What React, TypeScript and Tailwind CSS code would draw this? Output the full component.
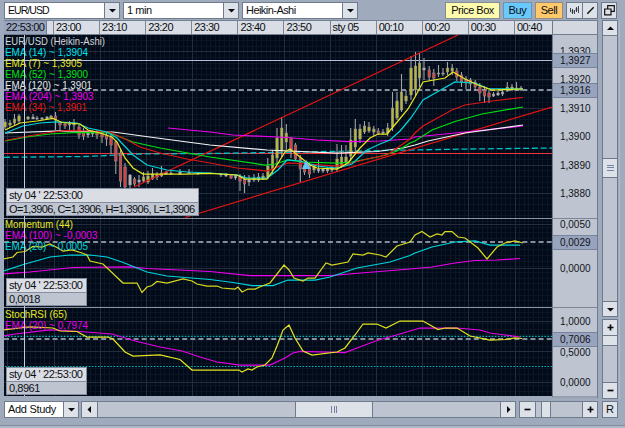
import type { ReactNode } from 'react';

type Candle = [number, number, number, number, number, string];

const Y = '#b9b63c';
const R = '#d24444';
const G = '#b4b6b8';

// x, high, low, body top, body bottom, colour
const candles: Candle[] = [
  [5, 119, 129, 122, 127, Y], [10, 120, 128, 123, 125, Y], [14.5, 114, 125, 119, 123, Y],
  [19, 114, 123, 116, 121, Y], [28, 116, 120, 117, 119, Y], [33, 114, 119, 117, 119, G],
  [37, 116, 120, 118, 119, G], [42, 117, 120, 118, 119, G], [47, 116, 119, 117, 119, G],
  [51, 115, 119, 116, 118, Y], [55.5, 112, 130, 116, 120, R], [60, 122, 131, 123, 125, R],
  [65, 123, 129, 124, 126, R], [69.5, 121, 130, 124, 125, G], [74, 119, 130, 123, 125, Y],
  [79, 124, 139, 127, 135, R], [83.5, 128, 140, 131, 136, R], [88, 130, 138, 132, 135, G],
  [92.5, 130, 137, 132, 134, G], [97, 130, 139, 132, 135, R], [102, 131, 143, 133, 137, R],
  [106.5, 132, 146, 135, 139, R], [111, 134, 154, 137, 145, R], [115.8, 140, 174, 142, 161, R],
  [120.5, 149, 187, 153, 181, R], [125, 163, 188, 167, 187, R], [130, 174, 188, 175, 185, G],
  [134.5, 177, 186, 179, 184, R], [139, 175, 187, 180, 182, G], [143.5, 172, 183, 177, 181, Y],
  [148, 171, 184, 176, 182, Y], [152.5, 168, 180, 174, 179, Y], [157, 172, 180, 175, 177, G],
  [161.5, 166, 177, 173, 176, Y], [166, 171, 175, 172, 174, G], [171, 170, 175, 173, 174, Y],
  [180, 169, 175, 172, 174, G], [189, 169, 174, 172, 173, G], [198, 172, 175, 173, 174, G],
  [221, 173, 177, 174, 175, G], [226, 173, 177, 174, 176, G], [231, 174, 179, 175, 178, R],
  [235.5, 174, 180, 175, 178, G], [240, 174, 191, 176, 181, R], [244.5, 175, 193, 179, 184, R],
  [249, 175, 186, 180, 182, G], [254, 174, 182, 178, 180, Y], [258.5, 173, 182, 177, 180, G],
  [263, 173, 180, 176, 179, Y], [267.8, 158, 179, 166, 177, Y], [272.5, 150, 174, 155, 170, Y],
  [277, 128, 165, 138, 158, Y], [281.7, 117, 157, 128, 151, Y], [286.3, 124, 150, 133, 142, Y],
  [291, 137, 158, 138, 150, R], [295.5, 143, 161, 145, 159, R], [300.3, 155, 182, 158, 169, R],
  [304.5, 162, 175, 166, 172, R], [309.5, 163, 178, 165, 174, R], [314, 164, 173, 166, 170, Y],
  [318.5, 160, 173, 169, 171, G], [323, 168, 173, 169, 171, G], [327.5, 167, 173, 169, 171, G],
  [332, 166, 172, 168, 170, G], [337, 144, 172, 159, 169, Y], [341.5, 145, 168, 157, 166, Y],
  [346, 145, 164, 157, 162, Y], [350.7, 128, 161, 140, 156, Y], [355.3, 119, 152, 129, 147, Y],
  [360, 124, 143, 129, 139, Y], [364.5, 121, 134, 126, 132, Y], [369, 122, 133, 127, 131, Y],
  [373.8, 126, 136, 129, 132, Y], [378.3, 128, 135, 131, 133, R], [383, 129, 135, 132, 133, G],
  [387.7, 123, 136, 128, 133, Y], [392.5, 92, 131, 108, 127, Y], [397, 92, 120, 101, 118, Y],
  [401.5, 74, 112, 92, 110, Y], [406, 90, 104, 96, 101, Y], [411, 56, 100, 68, 95, Y],
  [415.5, 52, 96, 66, 90, Y], [419.5, 53, 87, 63, 78, Y], [424, 58, 80, 68, 70, G],
  [429.2, 66, 81, 70, 77, R], [433.8, 69, 86, 73, 78, R], [438.5, 65, 77, 73, 74, G],
  [443, 68, 76, 73, 74, G], [447.5, 62, 75, 68, 72, Y], [452.2, 64, 75, 68, 71, Y],
  [456.8, 68, 81, 71, 77, R], [461.5, 72, 87, 75, 82, R], [466, 76, 89, 79, 83, R],
  [470.5, 78, 91, 80, 84, R], [475.2, 80, 91, 82, 87, R], [479.8, 83, 101, 87, 93, R],
  [484.5, 86, 103, 90, 96, R], [489, 90, 103, 93, 97, R], [493.5, 92, 97, 94, 96, G],
  [498, 91, 96, 93, 95, G], [502.5, 90, 96, 92, 94, G], [507.3, 82, 92, 87, 91, Y],
  [512, 84, 91, 87, 90, Y], [516.5, 82, 91, 88, 90, Y], [521, 86, 91, 88, 90, Y],
];

const studies: [string, string][] = [
  ['#f000f0', '168,128 210,132 233,135 287,137.5 317,140 350,141.5 380,141 410,139 415,137 475,131 523,126'],
  ['#f4f4f4', '5,133 60,131 113,132 157,138 210,145 267,150 337,153 377,151.5 403,148 415,145 428,141 465,133 523,125'],
  ['#00e010', '5,141 30,136.5 50,134 77,132.5 110,133 133,142 160,148 210,157 265,165 275,164 288,160 303,162 337,163 352,162 380,156.5 397,151 410,143 415,141 432,130 455,121.5 482,114 523,107'],
  ['#e01515', '5,140.5 28,136 50,132.5 67,130.5 90,131 110,132 127,140 140,147 160,153 187,159 210,163 237,168 267,171 288,163 307,164 337,166 352,163 367,159 387,155 410,139 415,133 423,126 452,110 465,105 492,101 523,97.5'],
  ['#00d4dc', '5,133 23,126 40,123 57,122 77,123 88,128 107,132 117,138 133,155 147,165 167,170 187,172 210,173 237,175 247,178 267,178 278,170 287,160 300,161 317,166 337,168 352,164 367,150 380,144 390,140 400,131 410,119 415,112 423,100 438,91.5 455,82 475,83 488,88.5 523,89'],
  ['#e8e820', '5,130 20,123 37,121 53,118.5 62,122.5 80,124 88,130 100,133 112,137 117,142 125,158 133,168 143,174 187,174 210,173.5 237,175 245,179 267,179 275,168 285,152 290,149 300,157 310,165 317,168 337,169 348,163 360,148 370,138 378,134 387,134 398,121 408,109 415,97 423,82 445,78 453,72 465,79 478,85 492,90 523,89'],
  ['#f000f0', '4,274 30,272 73,267.5 130,267 147,268.5 210,271.5 250,275.5 330,275.5 355,273.5 410,269 432,267 455,263 475,260.5 497,260 520,258.5'],
  ['#00d4dc', '4,271 25,264 50,257 70,255 90,255 107,257 122,262 147,272 167,276 210,279.5 233,282.5 252,285.5 273,285.5 288,280 315,280 330,277 357,268 390,262 410,255.5 415,253 432,247 455,242 475,241 490,245 520,245'],
  ['#d8d820', '4,259 13,257 17,252.5 25,251.5 33,246.5 42,247 50,244 57,247.5 63,251 72,250 82,253 87,255 90,261 103,264 123,283 137,283 142,292.5 147,287 152,285.5 157,281.5 167,283 183,279 192,281 197,284 207,286 217,286 222,288 235,289 238,287 242,292 248,289 255,289 262,286 270,283 284,265 289,270 294,278 303,281 308,278 315,278 326,263 332,265 348,262 353,254 363,255 368,253 380,255 386,257 397,246 410,242 415,235 422,231.5 430,237 437,234 442,235 445,231.5 452,231.5 458,237 465,238 478,248 487,259 497,247 505,243 515,241 523,243'],
  ['#e800e8', '4,336 15,334 50,330 73,331 112,334 135,341 160,347 182,351 200,357 217,362 240,365 270,365 285,358 293,353 300,351.5 345,352.5 365,345 377,340.5 400,334 410,331 420,328 457,328 480,330 490,333 505,335 520,337'],
  ['#e4e420', '4,330 20,328 30,327 53,328 60,331 77,331.5 87,337 108,337 113,339 125,352 133,356 160,355 180,359.5 192,370 239,370 242,372 248,369 252,370 257,367 265,365 272,358 277,346 283,330 289,325 295,338 303,351 312,355 337,352 345,348 355,335 363,324 377,324 386,328 400,321 423,321 438,329.5 445,328 457,328 470,336 490,340 505,339.5 515,338 522,338.5'],
];

const legends: [string, number, number, string][] = [
  ['EUR/USD (Heikin-Ashi)', 44.8, 100, '#d4d6da'],
  ['EMA (14) ~ 1,3904', 55.8, 83, '#00e0e8'],
  ['EMA (7) ~ 1,3905', 67, 77, '#e8e820'],
  ['EMA (52) ~ 1,3900', 78, 83, '#00e010'],
  ['EMA (120) ~ 1,3901', 89, 87, '#e8e8e8'],
  ['EMA (204) ~ 1,3903', 100, 88.5, '#f000f0'],
  ['EMA (34) ~ 1,3901', 111, 82, '#e81515'],
  ['Momentum (44)', 228, 68, '#e8e820'],
  ['EMA (100) ~ -0,0003', 239.3, 92.5, '#e800e8'],
  ['EMA (20) ~ 0,0005', 250, 83, '#00d4dc'],
  ['StochRSI (65)', 317.6, 62, '#e8e820'],
  ['EMA (20) ~ 0,7974', 328.6, 83, '#e800e8'],
];

const majorX = Array.from({ length: 12 }, (_, i) => Math.round(7.4 + i * 46.1) + 0.5);
const minorX = Array.from({ length: 119 }, (_, i) => Math.round(7.4 + i * 4.61) + 0.5);
const minorY = Array.from({ length: 64 }, (_, i) => Math.round(40 + i * 5.66) + 0.5);
const majorY = [51.5, 79.5, 108.5, 136.5, 165.5, 193.5, 224.5, 268.5, 321.5, 351.5, 382.5];

function Plot() {
  return (
    <svg className="block h-[361px] w-[548px] shrink-0" viewBox="4 35 548 361" fill="none" fontFamily="Liberation Sans, Arial, sans-serif">
      <rect x="4" y="35" width="548" height="361" fill="#010a19" />
      <g stroke="#0b1524" shapeRendering="crispEdges">
        {minorX.map((x) => <path key={x} d={`M${x} 35V396`} />)}
        {minorY.map((y) => <path key={y} d={`M4 ${y}H552`} />)}
      </g>
      <g stroke="#232d3b" shapeRendering="crispEdges">
        {majorX.map((x) => <path key={x} d={`M${x} 35V396`} />)}
        {majorY.map((y) => <path key={y} d={`M4 ${y}H552`} />)}
      </g>
      <path d="M4 218.5H552M4 307.5H552" stroke="#8c929e" shapeRendering="crispEdges" />
      <path d="M4 60.5H552" stroke="#b9bfdb" shapeRendering="crispEdges" />
      <path d="M4 90H552M4 242H552" stroke="#b1b9c8" strokeWidth="1.6" strokeDasharray="5 3.1" />
      <path d="M4 339H552" stroke="#858e9c" strokeWidth="2" strokeDasharray="5 3.1" />
      <path d="M5 336.4H552M5 366.5H552" stroke="#00b5b9" strokeWidth="1.2" strokeDasharray="1.6 1.5" />
      <path d="M4 153.5H552" stroke="#ed3540" strokeWidth="1.1" />
      <path d="M4 157.3L85 156.5L140 154L210 153.5L300 152L410 150L470 149L552 148" stroke="#00c0c8" strokeWidth="1.3" strokeDasharray="6 2.8" />
      {candles.map(([x, h, l, t, b, c]) => (
        <g key={x}>
          <path d={`M${x} ${h}V${l}`} stroke="#a2a4a5" strokeWidth="1.1" />
          <rect x={x - 1.2} y={t} width="2.5" height={b - t} fill={c} stroke="#929293" strokeWidth=".5" />
        </g>
      ))}
      <path d="M134 187L458 35M185 217.5L552 107" stroke="#e31414" strokeWidth="1.2" />
      {studies.map(([color, points]) => (
        <polyline key={points} points={points} stroke={color} strokeWidth="1.25" />
      ))}
      <path d="M306.3 160L310.8 169H301.8Z" fill="#62c5fb" />
      {legends.map(([text, y, w, color]) => (
        <text key={text + y} x="5" y={y} fill={color} fontSize="10.6" textLength={w} lengthAdjust="spacingAndGlyphs">{text}</text>
      ))}
      <path d="M24.5 35V396" stroke="#c3c9e0" shapeRendering="crispEdges" />
    </svg>
  );
}

const ticks: [string, number][] = [
  ['1,3930', 55], ['1,3920', 83], ['1,3910', 112], ['1,3900', 140.3], ['1,3890', 169], ['1,3880', 197],
  ['0,0050', 228.3], ['0,0000', 272.3], ['1,0000', 325], ['0,5000', 355.5], ['0,0000', 386],
];
const marks: [string, number, number][] = [
  ['1,3927', 53.5, 64], ['1,3916', 83.5, 93.7], ['0,0029', 235.5, 245.7], ['0,7006', 332.5, 342.5],
];

function PriceAxis() {
  return (
    <svg className="block h-[363px] w-[46px] shrink-0" viewBox="552 35 46 363" fontSize="10.8" fontFamily="Liberation Sans, Arial, sans-serif">
      <rect x="552" y="35" width="46" height="363" fill="#bec5d1" />
      {ticks.map(([t, y]) => (
        <text key={y} x="560" y={y} fill="#111318" textLength="30.5" lengthAdjust="spacingAndGlyphs">{t}</text>
      ))}
      <path d="M552 218.5H598M552 307.5H598" stroke="#7d8594" />
      {marks.map(([t, top, y]) => (
        <g key={t}>
          <rect x="552" y={top} width="45.5" height="14" fill="#98a4bd" stroke="#78849d" strokeWidth="1" />
          <text x="560" y={y} fill="#111318" textLength="30.5" lengthAdjust="spacingAndGlyphs">{t}</text>
        </g>
      ))}
      <path d="M552.5 35V397M597.5 35V398M552 397H598" stroke="#6f7a8c" fill="none" />
    </svg>
  );
}

function Arrow({ dir }: { dir: 'up' | 'down' | 'left' | 'right' }) {
  const d = { up: 'M4.5 2.5L8 6H1Z', down: 'M1 3H8L4.5 6.5Z', left: 'M6 1V8L2.5 4.5Z', right: 'M3 1V8L6.5 4.5Z' }[dir];
  return <svg className="size-[9px]" viewBox="0 0 9 9"><path d={d} fill="#080a0e" /></svg>;
}

function Sign({ plus = false }: { plus?: boolean }) {
  return (
    <svg className="size-[7px]" viewBox="0 0 7 7" stroke="#080a0e" strokeWidth="1.7">
      <path d={plus ? 'M.5 3.5H6.5M3.5 .5V6.5' : 'M.5 3.5H6.5'} />
    </svg>
  );
}

function Cell({ className, children }: { className: string; children?: ReactNode }) {
  return <div className={`flex shrink-0 items-center justify-center border-[#6f7a8c] bg-[#dde1e8] ${className}`}>{children}</div>;
}

function Select({ label, className, text }: { label: string; className: string; text: string }) {
  return (
    <div className={`flex h-[17px] shrink-0 border border-[#6f7a8c] bg-white ${className}`}>
      <div className="flex flex-1 items-center whitespace-nowrap pl-[3px] leading-none">
        <span className={text}>{label}</span>
      </div>
      <Cell className="w-[15px] border-l"><Arrow dir="down" /></Cell>
    </div>
  );
}

function Readout({ className, value, valueStyle }: { className: string; value: string; valueStyle: string }) {
  return (
    <div className={`absolute left-[2px] flex h-[28px] flex-col whitespace-nowrap border border-[#858e9e] text-[11px] leading-[13px] ${className}`}>
      <div className="h-[13px] bg-[#dadde4] pl-[2px] tracking-[-0.4px]">sty 04 ' 22:53:00</div>
      <div className={`h-[13px] border-t border-[#858e9e] bg-[#bec5d1] pl-[2px] leading-[12px] ${valueStyle}`}>{value}</div>
    </div>
  );
}

const times = ['23:00', '23:10', '23:20', '23:30', '23:40', '23:50', 'sty 05', '00:10', '00:20', '00:30', '00:40'];

export default function App() {
  return (
    <div className="flex h-[428px] w-[625px] flex-col overflow-hidden bg-[#9fabbd] pl-[4px] pt-[2px] font-['Liberation_Sans',Arial,sans-serif] text-[11px] text-[#0c0e12]">
      <div className="flex h-[18px] shrink-0">
        <Select label="EUR/USD" className="w-[116px]" text="text-[10.5px] tracking-[-0.95px]" />
        <Select label="1 min" className="ml-[3px] w-[116px]" text="tracking-[-0.45px]" />
        <Select label="Heikin-Ashi" className="ml-[3px] w-[116px]" text="tracking-[-0.55px]" />
        <div className="ml-[87px] flex h-[17px] w-[55px] items-center justify-center whitespace-nowrap border border-[#848d91] bg-[#fffbad] tracking-[-0.5px]">Price Box</div>
        <div className="ml-[3px] flex h-[17px] w-[29px] items-center justify-center border border-[#7590ab] bg-[#68c9fc] tracking-[-0.4px]">Buy</div>
        <div className="ml-[3px] flex h-[17px] w-[28px] items-center justify-center border border-[#948b80] bg-[#ffc96c] tracking-[-0.4px]">Sell</div>
        <div className="ml-[3px] flex h-[17px] w-[32px] border border-[#6f7a8c]">
          <Cell className="w-[15px]">
            <svg className="h-[9px] w-[11px]" viewBox="0 0 11 9" stroke="#30343c"><path d="M1.5 2V6M3.5 3V8M5.5 4V8M7.5 1V6M9.5 0V7" strokeWidth=".9" /><path d="M3.5 4V7M7.5 2V5" strokeWidth="1.5" /></svg>
          </Cell>
          <Cell className="w-[15px] border-l"><svg className="size-[9px]" viewBox="0 0 9 9"><path d="M1.3 7.7L7.7 1.3" stroke="#111" strokeWidth="1.4" /></svg></Cell>
        </div>
        <Cell className="ml-[3px] h-[17px] w-[16px] border">
          <svg className="size-[11px]" viewBox="0 0 11 11" fill="#dde1e8" stroke="#111" strokeWidth="1.2"><path d="M3.7 .7H10.3V6.3H3.7Z" /><path d="M.7 4H7V9.8H.7Z" /></svg>
        </Cell>
      </div>

      <div className="flex h-[379px] shrink-0">
        <div className="flex w-[594px] shrink-0 flex-col">
          <div className="flex h-[15px] shrink-0 border-y border-[#737e90] bg-[#d9dde5] leading-[13px] tracking-[-0.55px]">
            <div className="w-[43px] shrink-0 whitespace-nowrap border-r border-[#6f7a8c] bg-[#98a4bd] pl-[2px]">22:53:00</div>
            <div className="w-[6px] shrink-0" />
            <div className="grid w-[499px] shrink-0 grid-cols-[repeat(10,46.1px)_38px]">
              {times.map((t) => <div key={t} className="whitespace-nowrap border-l border-[#7d8797] pl-[2px]">{t}</div>)}
            </div>
            <div className="flex-1 border-x border-[#6f7a8c] bg-[#d3d8e0]" />
          </div>
          <div className="relative flex shrink-0">
            <Plot />
            <PriceAxis />
            <Readout className="top-[153px] w-[193px]" value="O=1,3906, C=1,3906, H=1,3906, L=1,3906" valueStyle="tracking-[-0.62px]" />
            <Readout className="top-[243px] w-[81px]" value="0,0018" valueStyle="tracking-[-0.45px]" />
            <Readout className="top-[332px] w-[81px]" value="0,8961" valueStyle="tracking-[-0.45px]" />
          </div>
        </div>
        <div className="ml-[4px] flex w-[16px] shrink-0 flex-col gap-[2px]">
          <div className="flex h-[297px] flex-col border border-[#6f7a8c] bg-[#bec5d1]">
            <Cell className="h-[15px] border-b"><Arrow dir="up" /></Cell>
            <div className="h-[122px]" />
            <Cell className="h-[20px] border-y">
              <div className="h-[6px] w-[7px] border-y border-[#7482a5] pt-px"><div className="h-px bg-[#7482a5]" /></div>
            </Cell>
            <div className="flex-1" />
            <Cell className="h-[15px] border-t"><Arrow dir="down" /></Cell>
          </div>
          <div className="flex h-[80px] flex-col border border-[#6f7a8c] bg-[#bec5d1]">
            <Cell className="h-[16px] border-b"><Sign plus /></Cell>
            <Cell className="h-[10px] border-b" />
            <div className="flex-1" />
            <Cell className="h-[16px] border-t"><Sign /></Cell>
          </div>
        </div>
        <div className="ml-[1px] w-px shrink-0 bg-[#b0bac8]" />
      </div>

      <div className="mt-[2px] flex h-[17px] shrink-0">
        <Select label="Add Study" className="w-[75px]" text="tracking-[-0.3px]" />
        <div className="ml-[2px] flex w-[435px] border border-[#6f7a8c] bg-[#bec5d1]">
          <Cell className="w-[16px] border-r"><Arrow dir="left" /></Cell>
          <div className="w-[197px] shrink-0" />
          <Cell className="w-[78px] border-x"><div className="flex h-[7px] w-[6px] justify-between border-x border-[#7482a5] px-[1px]"><div className="mx-auto w-px bg-[#7482a5]" /></div></Cell>
          <div className="flex-1" />
          <Cell className="w-[15px] border-l"><Arrow dir="right" /></Cell>
        </div>
        <div className="ml-[3px] flex w-[79px] border border-[#6f7a8c] bg-[#bec5d1]">
          <Cell className="w-[16px] border-r"><Sign /></Cell>
          <div className="w-[5px]" />
          <Cell className="w-[10px] border-x" />
          <div className="flex-1" />
          <Cell className="w-[15px] border-l"><Sign plus /></Cell>
        </div>
        <Cell className="ml-[4px] w-[16px] border">R</Cell>
      </div>
      <div className="-ml-[4px] mt-[7px] h-px shrink-0 bg-[#7f8b9e]" />
      <div className="-ml-[4px] flex-1 bg-[#aeb8c7]" />
    </div>
  );
}
